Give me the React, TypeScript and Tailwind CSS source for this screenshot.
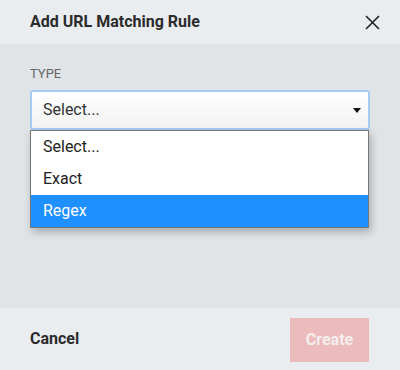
export default function App() {
  const options = ["Select...", "Exact", "Regex"];
  const active = "Regex";

  return (
    <div className="w-[400px] h-[370px] flex flex-col bg-[#e0e4e7] font-['Roboto',sans-serif] text-[#222]">
      {/* Header */}
      <div className="h-[44px] shrink-0 flex items-center justify-between pl-[30px] pr-[20px] bg-[#eaedf0]">
        <h2 className="text-[16px] font-bold text-[#2b2b2b]">Add URL Matching Rule</h2>
        <button className="w-[16px] h-[16px] flex items-center justify-center text-[#222]">
          <svg width="15" height="15" viewBox="0 0 15 15" fill="none" stroke="currentColor" strokeWidth="1.6">
            <path d="M1 1L14 14M14 1L1 14" />
          </svg>
        </button>
      </div>

      {/* Body */}
      <div className="flex-1 px-[30px] pt-[22px]">
        <label className="block text-[13px] leading-[15px] text-[#666]">TYPE</label>
        <div className="relative mt-[9px]">
          <div className="h-[40px] flex items-center justify-between pl-[11px] pr-[7px] rounded-[3px] border-[2px] border-[#a6cbf5] bg-gradient-to-b from-white to-[#f2f2f2]">
            <span className="text-[16px] text-[#333]">Select...</span>
            <svg width="8" height="5" viewBox="0 0 8 5">
              <path d="M0 0H8L4 5Z" fill="#111" />
            </svg>
          </div>
          <ul className="absolute left-0 right-[1px] top-[40px] bg-white border border-[#777] shadow-[2px_4px_8px_rgba(0,0,0,0.25)]">
            {options.map((o) => (
              <li
                key={o}
                className={
                  o === active
                    ? "h-[32px] flex items-center pl-[12px] text-[16px] bg-[#1e90ff] text-white"
                    : "h-[32px] flex items-center pl-[12px] text-[16px] text-[#222]"
                }
              >
                {o}
              </li>
            ))}
          </ul>
        </div>
      </div>

      {/* Footer */}
      <div className="h-[62px] shrink-0 flex items-center justify-between pl-[30px] pr-[31px] bg-[#eaedf0]">
        <button className="text-[16px] font-bold text-[#2b2b2b]">Cancel</button>
        <button className="w-[79px] h-[44px] mt-[2px] bg-[#ecbcbd] text-[16px] font-bold text-[#f5eeee]">Create</button>
      </div>
    </div>
  );
}
